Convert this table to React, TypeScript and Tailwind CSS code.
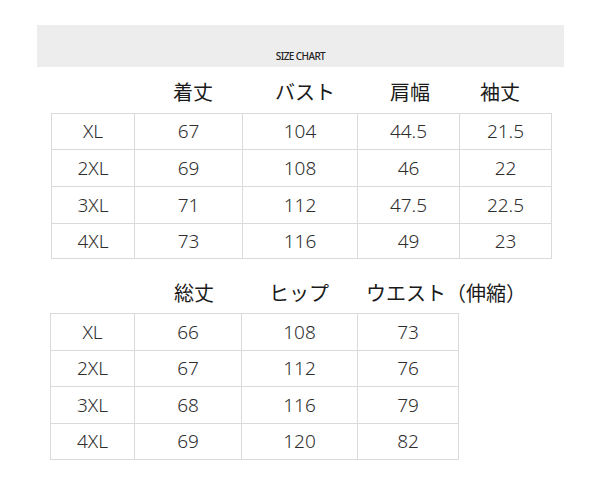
const FONT = "font-['Noto_Sans','Noto_Sans_CJK_JP',sans-serif]";

const TOP_WIDTHS = [82, 107, 114, 101, 91];
const TOP_HEIGHTS = [35, 36, 36, 34];
const TOP_ROWS = [
  ['XL', '67', '104', '44.5', '21.5'],
  ['2XL', '69', '108', '46', '22'],
  ['3XL', '71', '112', '47.5', '22.5'],
  ['4XL', '73', '116', '49', '23'],
];

const BOTTOM_WIDTHS = [83, 106, 115, 100];
const BOTTOM_HEIGHTS = [36, 35, 36, 35];
const BOTTOM_ROWS = [
  ['XL', '66', '108', '73'],
  ['2XL', '67', '112', '76'],
  ['3XL', '68', '116', '79'],
  ['4XL', '69', '120', '82'],
];

function SizeTable({ widths, heights, rows }: { widths: number[]; heights: number[]; rows: string[][] }) {
  return (
    <div className="inline-flex flex-col gap-px bg-[#dadada] p-px">
      {rows.map((row, r) => (
        <div key={r} className="flex gap-px">
          {row.map((cell, c) => (
            <div
              key={c}
              className="flex items-center justify-center bg-white text-[19px] font-light leading-none text-[#2e2e2e]"
              style={{ width: widths[c], height: heights[r] }}
            >
              {cell}
            </div>
          ))}
        </div>
      ))}
    </div>
  );
}

export default function App() {
  return (
    <div className={`h-[483px] w-[600px] overflow-hidden bg-white ${FONT}`}>
      {/* Banner */}
      <div className="ml-[37px] mt-[25px] flex h-[42px] w-[527px] items-end justify-center bg-[#ededed] pb-[6px]">
        <span className="text-[10px] font-medium leading-none tracking-[-0.6px] text-[#222]">SIZE CHART</span>
      </div>

      {/* Top headers */}
      <div className="ml-[51px] mt-[15px] flex h-[22px] items-center text-[20px] leading-none text-[#1a1a1a]">
        <div className="w-[83px]" />
        <div className="w-[108px] pl-[10px] text-center">着丈</div>
        <div className="w-[115px] pl-[11px] text-center">バスト</div>
        <div className="w-[102px] pl-[4px] text-center">肩幅</div>
        <div className="w-[92px] pr-[10px] text-center">袖丈</div>
      </div>

      <div className="ml-[51px] mt-[9px]">
        <SizeTable widths={TOP_WIDTHS} heights={TOP_HEIGHTS} rows={TOP_ROWS} />
      </div>

      {/* Bottom headers */}
      <div className="ml-[50px] mt-[24px] flex h-[22px] items-center text-[20px] leading-none text-[#1a1a1a]">
        <div className="w-[84px]" />
        <div className="w-[107px] pl-[13px] text-center">総丈</div>
        <div className="w-[116px] text-center">ヒップ</div>
        <div className="w-[101px] whitespace-nowrap pl-[9px]">ウエスト（伸縮）</div>
      </div>

      <div className="ml-[50px] mt-[8px]">
        <SizeTable widths={BOTTOM_WIDTHS} heights={BOTTOM_HEIGHTS} rows={BOTTOM_ROWS} />
      </div>
    </div>
  );
}
